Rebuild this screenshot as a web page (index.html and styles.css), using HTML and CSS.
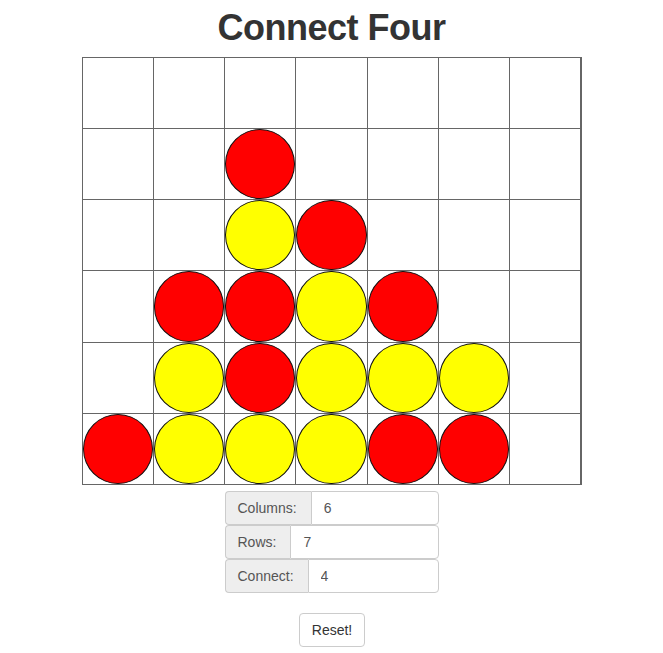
FILE: index.html
```html
<!DOCTYPE html>
<html>
<head>
<meta charset="utf-8">
<link rel="stylesheet" href="styles.css">
</head>
<body>
<div class="page">
  <h1 class="title">Connect Four</h1>
  <div class="board">
    <div class="cell"></div><div class="cell"></div><div class="cell"></div><div class="cell"></div><div class="cell"></div><div class="cell"></div><div class="cell"></div>
    <div class="cell"></div><div class="cell"></div><div class="cell"><span class="disc red"></span></div><div class="cell"></div><div class="cell"></div><div class="cell"></div><div class="cell"></div>
    <div class="cell"></div><div class="cell"></div><div class="cell"><span class="disc yellow"></span></div><div class="cell"><span class="disc red"></span></div><div class="cell"></div><div class="cell"></div><div class="cell"></div>
    <div class="cell"></div><div class="cell"><span class="disc red"></span></div><div class="cell"><span class="disc red"></span></div><div class="cell"><span class="disc yellow"></span></div><div class="cell"><span class="disc red"></span></div><div class="cell"></div><div class="cell"></div>
    <div class="cell"></div><div class="cell"><span class="disc yellow"></span></div><div class="cell"><span class="disc red"></span></div><div class="cell"><span class="disc yellow"></span></div><div class="cell"><span class="disc yellow"></span></div><div class="cell"><span class="disc yellow"></span></div><div class="cell"></div>
    <div class="cell"><span class="disc red"></span></div><div class="cell"><span class="disc yellow"></span></div><div class="cell"><span class="disc yellow"></span></div><div class="cell"><span class="disc yellow"></span></div><div class="cell"><span class="disc red"></span></div><div class="cell"><span class="disc red"></span></div><div class="cell"></div>
  </div>
  <div class="controls">
    <div class="input-group"><span class="addon">Columns:</span><input class="field" type="text" value="6"></div>
    <div class="input-group"><span class="addon">Rows:</span><input class="field" type="text" value="7"></div>
    <div class="input-group"><span class="addon">Connect:</span><input class="field" type="text" value="4"></div>
  </div>
  <button class="btn" type="button">Reset!</button>
</div>
</body>
</html>
```

FILE: styles.css
```css
html, body {
  margin: 0;
  padding: 0;
  background: #fff;
}
body {
  font-family: "Liberation Sans", Arial, sans-serif;
  font-size: 14px;
  color: #333;
}
.page {
  display: flex;
  flex-direction: column;
  align-items: center;
  padding-top: 8px;
}
.title {
  margin: 0 0 9px;
  font-size: 36px;
  line-height: 40px;
  font-weight: bold;
  color: #333;
  letter-spacing: -0.5px;
}
.board {
  width: 500px;
  height: 428px;
  box-sizing: border-box;
  display: grid;
  grid-template-columns: repeat(7, 1fr);
  grid-template-rows: repeat(6, 1fr);
  gap: 1px;
  padding: 1px;
  background: #666;
}
.cell {
  background: #fff;
  display: flex;
  align-items: center;
  justify-content: center;
  min-width: 0;
  min-height: 0;
}
.disc {
  display: block;
  width: 100%;
  height: 100%;
  box-sizing: border-box;
  border-radius: 50%;
  border: 1px solid #111;
}
.red { background: #ff0000; }
.yellow { background: #ffff00; }
.controls {
  margin-top: 6px;
  width: 214px;
  display: flex;
  flex-direction: column;
}
.input-group {
  display: flex;
  height: 34px;
}
.addon {
  display: flex;
  align-items: center;
  padding: 0 14px 0 12px;
  background: #eee;
  border: 1px solid #ccc;
  border-right: 0;
  border-radius: 4px 0 0 4px;
  color: #555;
  font-size: 14px;
  white-space: nowrap;
}
.field {
  flex: 1;
  min-width: 0;
  height: 34px;
  box-sizing: border-box;
  border: 1px solid #ccc;
  border-radius: 0 4px 4px 0;
  padding: 6px 12px;
  font-family: "Liberation Sans", Arial, sans-serif;
  font-size: 14px;
  color: #555;
  background: #fff;
  margin: 0;
}
.btn {
  margin-top: 20px;
  margin-left: 1px;
  height: 34px;
  padding: 6px 12px;
  border: 1px solid #ccc;
  border-radius: 4px;
  background: #fff;
  color: #333;
  font-family: "Liberation Sans", Arial, sans-serif;
  font-size: 14px;
}
```
